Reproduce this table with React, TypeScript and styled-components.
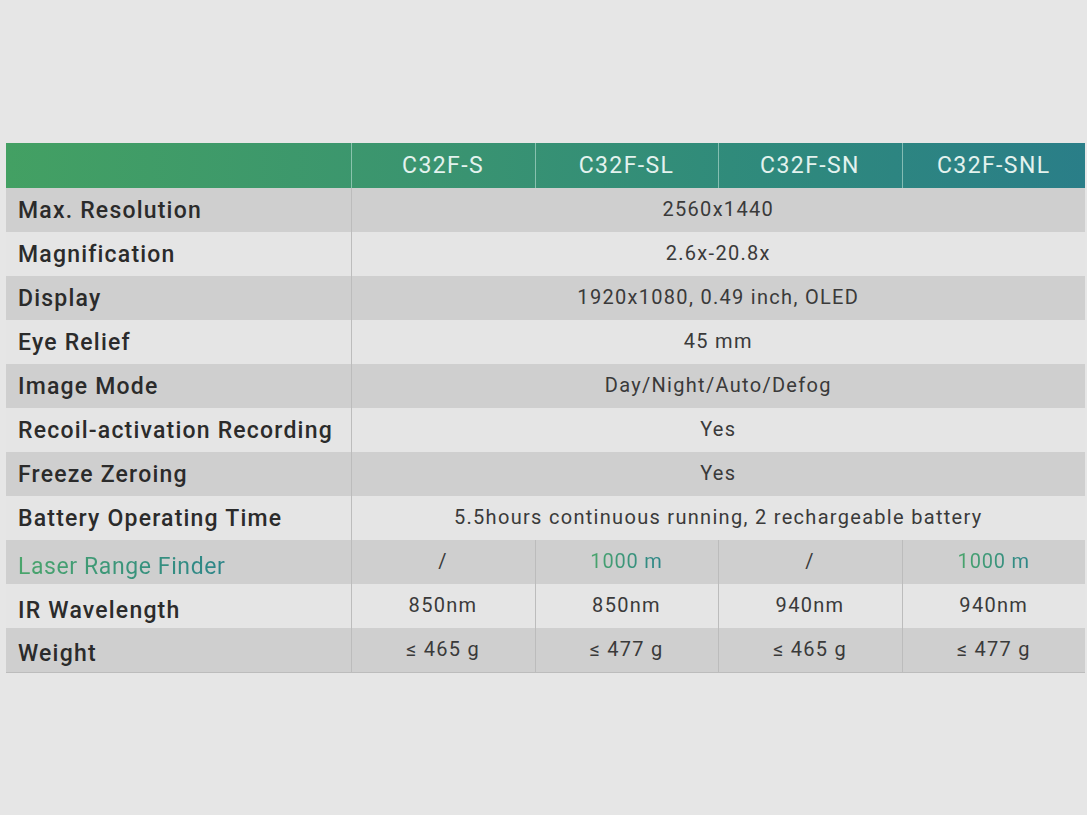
import React from "react";
import styled, { createGlobalStyle, css } from "styled-components";

const Global = createGlobalStyle`
  html, body { margin: 0; padding: 0; background: #e6e6e6; }
  body { font-family: "Roboto", "DejaVu Sans", sans-serif; }
`;

const Page = styled.div`
  width: 1087px;
  height: 815px;
  padding-top: 143px;
  padding-left: 6px;
  box-sizing: border-box;
  background: #e6e6e6;
`;

const Table = styled.table`
  width: 1079px;
  border-collapse: collapse;
  table-layout: fixed;
  border-bottom: 1px solid #bcbcbc;
`;

const HeadRow = styled.tr`
  height: 45px;
  background: linear-gradient(90deg, #43a063 0%, #3a9470 40%, #2f8a7c 70%, #2a7e88 100%);
`;

const HeadCell = styled.th`
  padding: 0;
  font-weight: 400;
  font-size: 23px;
  letter-spacing: 1.4px;
  color: #e3f2ee;
  text-align: center;
  border-left: 1px solid rgba(190, 225, 215, 0.6);
  &:first-child { border-left: none; }
`;

const Row = styled.tr<{ $alt: boolean }>`
  height: 44px;
  background: ${(p) => (p.$alt ? "#cfcfcf" : "#e5e5e5")};
`;

const gradText = css`
  background: linear-gradient(90deg, #4aa56b, #2c8589);
  -webkit-background-clip: text;
  background-clip: text;
  color: transparent;
`;

const Label = styled.td<{ $accent?: boolean; $low?: boolean }>`
  padding: ${(p) => (p.$low ? "8px 0 0 12px" : "0 0 0 12px")};
  font-size: 23px;
  font-weight: 500;
  letter-spacing: 1.2px;
  color: #2b2b2b;
  white-space: nowrap;
  border-right: 1px solid #bcbcbc;
  ${(p) => p.$accent && css`
    font-weight: 400;
    letter-spacing: 0.6px;
    span { ${gradText} }
  `}
`;

const Value = styled.td<{ $accent?: boolean }>`
  padding: 0 0 2px;
  font-size: 20px;
  letter-spacing: 1.3px;
  color: #3a3a3a;
  text-align: center;
  white-space: nowrap;
  border-left: 1px solid #bcbcbc;
  ${(p) => p.$accent && css`
    letter-spacing: 0.8px;
    span { ${gradText} }
  `}
`;

const models = ["C32F-S", "C32F-SL", "C32F-SN", "C32F-SNL"];

const spanned: [string, string][] = [
  ["Max. Resolution", "2560x1440"],
  ["Magnification", "2.6x-20.8x"],
  ["Display", "1920x1080, 0.49 inch, OLED"],
  ["Eye Relief", "45 mm"],
  ["Image Mode", "Day/Night/Auto/Defog"],
  ["Recoil-activation Recording", "Yes"],
  ["Freeze Zeroing", "Yes"],
  ["Battery Operating Time", "5.5hours continuous running, 2 rechargeable battery"],
];

const split: { label: string; accent?: boolean; values: string[] }[] = [
  { label: "Laser Range Finder", accent: true, values: ["/", "1000 m", "/", "1000 m"] },
  { label: "IR Wavelength", values: ["850nm", "850nm", "940nm", "940nm"] },
  { label: "Weight", values: ["≤ 465 g", "≤ 477 g", "≤ 465 g", "≤ 477 g"] },
];

export default function App() {
  return (
    <Page>
      <Global />
      <Table>
        <colgroup>
          <col style={{ width: 345 }} />
          <col style={{ width: 184 }} />
          <col style={{ width: 183 }} />
          <col style={{ width: 184 }} />
          <col style={{ width: 183 }} />
        </colgroup>
        <thead>
          <HeadRow>
            <HeadCell />
            {models.map((m) => (
              <HeadCell key={m}>{m}</HeadCell>
            ))}
          </HeadRow>
        </thead>
        <tbody>
          {spanned.map(([l, v], i) => (
            <Row key={l} $alt={i % 2 === 0}>
              <Label>{l}</Label>
              <Value colSpan={4}>{v}</Value>
            </Row>
          ))}
          {split.map((r, i) => (
            <Row key={r.label} $alt={(spanned.length + i) % 2 === 0}>
              <Label $accent={r.accent} $low>
                <span>{r.label}</span>
              </Label>
              {r.values.map((v, j) => (
                <Value key={j} $accent={r.accent && v !== "/"}>
                  <span>{v}</span>
                </Value>
              ))}
            </Row>
          ))}
        </tbody>
      </Table>
    </Page>
  );
}
